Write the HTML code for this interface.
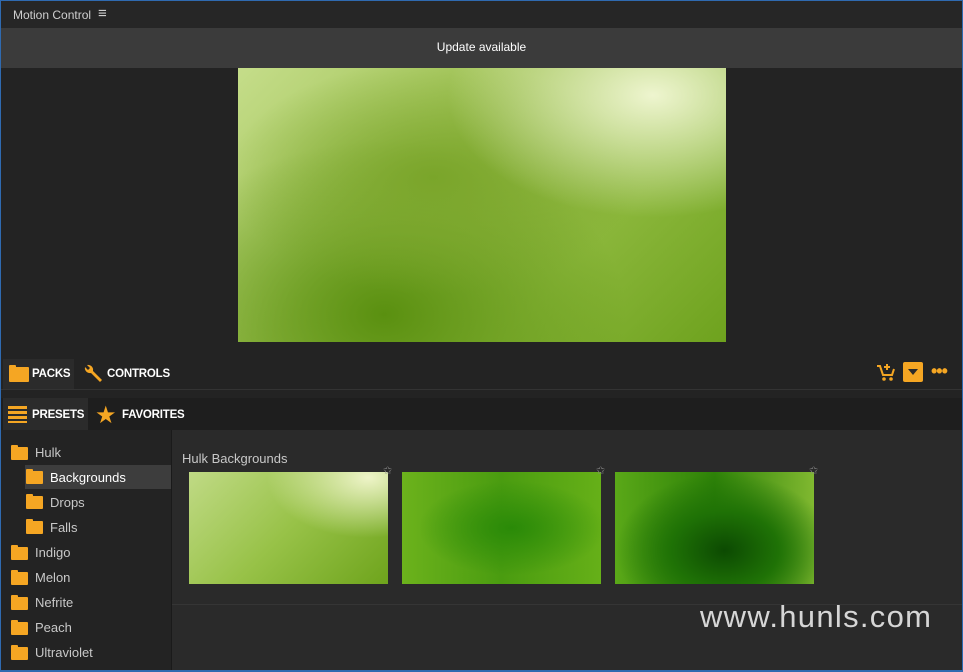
<!DOCTYPE html>
<html><head><style>
*{margin:0;padding:0;box-sizing:border-box}
body{width:963px;height:672px;overflow:hidden;background:#2f6ab0;font-family:"Liberation Sans",sans-serif;position:relative}
.win{position:absolute;left:1px;top:1px;width:961px;height:669px;background:#232323;overflow:hidden}
.a{position:absolute}
.t{color:#fff;font-weight:bold;font-size:11.5px;letter-spacing:-0.2px}
.fold{position:absolute;width:17px;height:13px;background:#f5a623;border-radius:1px}
.fold:before{content:"";position:absolute;left:0;top:-2px;width:7px;height:3px;background:#f5a623;border-radius:1px 1px 0 0}
.it{position:absolute;color:#c8c8c8;font-size:13px}
.img{position:absolute}
</style></head><body><div class="win">
<div class="a" style="left:0;top:0;width:961px;height:27px;background:#262626"></div>
<div class="a" style="left:12px;top:7px;color:#cfcfcf;font-size:12px">Motion Control</div>
<div class="a" style="left:97px;top:4px;color:#cfcfcf;font-size:15px">≡</div>
<div class="a" style="left:0;top:27px;width:961px;height:40px;background:#3b3b3b"></div>
<div class="a" style="left:0;top:39px;width:961px;text-align:center;color:#fff;font-size:12px">Update available</div>
<div class="img" style="left:237px;top:67px;width:488px;height:274px;background:radial-gradient(ellipse at 85% 10%,#eef5cf 0%,rgba(230,240,190,0) 35%),radial-gradient(ellipse at 40% 40%,#7aa52a 0%,rgba(120,165,40,0) 50%),radial-gradient(ellipse at 30% 90%,#5a9010 0%,rgba(90,144,16,0) 50%),linear-gradient(135deg,#c5dd8a,#9cc050 40%,#8ab63a 70%,#6ea21e)"></div>
<div class="a" style="left:2px;top:358px;width:71px;height:31px;background:#2b2b2b"></div>
<div class="fold" style="left:8px;top:366px;width:20px;height:15px"></div>
<div class="a t" style="left:31px;top:367px">PACKS</div>
<svg class="a" style="left:81px;top:362px" width="22" height="22" viewBox="0 0 22 22"><path d="M3 4 a5 5 0 0 0 6 6 L18 19 l2-2 -9-9 a5 5 0 0 0-6-6 l3 3 -2 2z" fill="#f5a623"/></svg>
<div class="a t" style="left:106px;top:367px">CONTROLS</div>
<svg class="a" style="left:874px;top:362px" width="22" height="20" viewBox="0 0 22 20"><path d="M2 3h3l3 9h9l2-6" stroke="#f5a623" stroke-width="2" fill="none"/><path d="M12 1v6M9 4h6" stroke="#f5a623" stroke-width="2"/><circle cx="9" cy="16" r="1.8" fill="#f5a623"/><circle cx="16" cy="16" r="1.8" fill="#f5a623"/></svg>
<div class="a" style="left:902px;top:361px;width:20px;height:20px;background:#f5a623;border-radius:2px"><div class="a" style="left:5px;top:7px;border:5px solid transparent;border-top:6px solid #2a2a2a"></div></div>
<div class="a" style="left:930px;top:360px;color:#f5a623;font-size:18px;font-weight:bold;letter-spacing:-1px">•••</div>
<div class="a" style="left:0;top:388px;width:961px;height:1px;background:#333"></div>
<div class="a" style="left:0;top:397px;width:961px;height:32px;background:#1e1e1e"></div>
<div class="a" style="left:2px;top:397px;width:85px;height:32px;background:#2b2b2b"></div>
<div class="a" style="left:7px;top:405px;width:19px;height:17px;background:repeating-linear-gradient(#f5a623 0 3px,transparent 3px 5px)"></div>
<div class="a t" style="left:31px;top:408px">PRESETS</div>
<div class="a" style="left:94px;top:400px;color:#f5a623;font-size:24px">★</div>
<div class="a t" style="left:121px;top:408px">FAVORITES</div>
<div class="a" style="left:171px;top:429px;width:790px;height:240px;background:#2a2a2a"></div>
<div class="a" style="left:170px;top:429px;width:1px;height:240px;background:#1a1a1a"></div>
<div class="a" style="left:171px;top:603px;width:790px;height:1px;background:#353535"></div>
<div class="a" style="left:24px;top:464px;width:146px;height:24px;background:#3d3d3d"></div>
<div class="fold" style="left:10px;top:446px"></div><div class="it" style="left:34px;top:444px">Hulk</div>
<div class="fold" style="left:25px;top:470px"></div><div class="it" style="left:49px;top:469px;color:#fff">Backgrounds</div>
<div class="fold" style="left:25px;top:495px"></div><div class="it" style="left:49px;top:494px">Drops</div>
<div class="fold" style="left:25px;top:520px"></div><div class="it" style="left:49px;top:519px">Falls</div>
<div class="fold" style="left:10px;top:546px"></div><div class="it" style="left:34px;top:544px">Indigo</div>
<div class="fold" style="left:10px;top:571px"></div><div class="it" style="left:34px;top:569px">Melon</div>
<div class="fold" style="left:10px;top:596px"></div><div class="it" style="left:34px;top:594px">Nefrite</div>
<div class="fold" style="left:10px;top:621px"></div><div class="it" style="left:34px;top:619px">Peach</div>
<div class="fold" style="left:10px;top:646px"></div><div class="it" style="left:34px;top:644px">Ultraviolet</div>
<div class="it" style="left:181px;top:450px;font-size:13px">Hulk Backgrounds</div>
<div class="img" style="left:188px;top:471px;width:199px;height:112px;background:radial-gradient(ellipse at 90% 5%,#eef4c8,rgba(238,244,200,0) 40%),linear-gradient(135deg,#c0da85,#98c248 50%,#6ea41c)"></div>
<div class="img" style="left:401px;top:471px;width:199px;height:112px;background:radial-gradient(ellipse at 55% 50%,#2a8a08,rgba(42,138,8,0) 60%),linear-gradient(90deg,#6cb21c,#4a9c10 50%,#66b018)"></div>
<div class="img" style="left:614px;top:471px;width:199px;height:112px;background:radial-gradient(ellipse at 55% 70%,#0c4a02,#1f7206 35%,rgba(60,140,20,0) 70%),linear-gradient(90deg,#5aa818,#2e8208 50%,#80b830)"></div>
<div class="a" style="left:382px;top:463px;color:#888;font-size:11px">✩</div>
<div class="a" style="left:595px;top:463px;color:#888;font-size:11px">✩</div>
<div class="a" style="left:808px;top:463px;color:#888;font-size:11px">✩</div>
<div class="a" style="left:699px;top:598px;color:#d6d6d6;font-size:31px;letter-spacing:1.3px">www.hunls.com</div>
</div></body></html>
